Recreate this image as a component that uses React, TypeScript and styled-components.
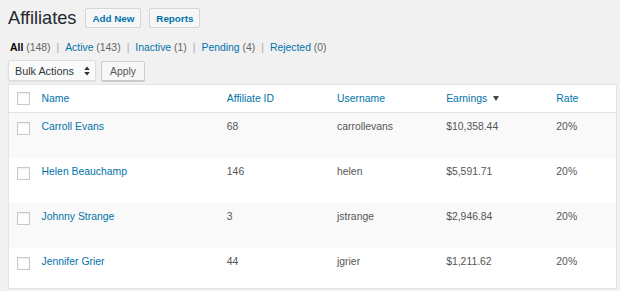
import styled, {createGlobalStyle} from "styled-components";

const GlobalStyle = createGlobalStyle`
  html, body {
    margin: 0;
    background: #f1f1f1;
  }
  body {
    font-family: "Liberation Sans", Arial, sans-serif;
    color: #444;
  }
`;

const Wrap = styled.div`
  padding: 8px 3px 0 8px;
`;

const HeadingRow = styled.div`
  display: flex;
  align-items: center;
  gap: 8px;
  height: 20px;
`;

const Title = styled.h1`
  margin: 0 1px 0 0;
  font-size: 18.2px;
  font-weight: 400;
  line-height: 20px;
  color: #23282d;
`;

const PageButton = styled.a`
  display: inline-flex;
  align-items: center;
  height: 20px;
  box-sizing: border-box;
  padding: 0 6px;
  border: 1px solid #d5d5d5;
  border-radius: 2px;
  background: #f7f7f7;
  color: #0073aa;
  font-size: 9.8px;
  font-weight: 700;
  text-decoration: none;
`;

const Filters = styled.ul`
  display: flex;
  margin: 14px 0 0 2px;
  padding: 0;
  list-style: none;
  font-size: 10.4px;
  line-height: 12px;
  color: #666;
`;

const Filter = styled.li<{ $current?: boolean }>`
  a {
    color: ${p => (p.$current ? "#000" : "#0073aa")};
    font-weight: ${p => (p.$current ? 700 : 400)};
    text-decoration: none;
  }
`;

const Sep = styled.span`
  color: #aaa;
  margin: 0 6px;
`;

const TableNav = styled.div`
  display: flex;
  gap: 5px;
  margin-top: 6px;
  height: 21px;
`;

const BulkSelect = styled.div`
  display: flex;
  align-items: center;
  justify-content: space-between;
  width: 88px;
  box-sizing: border-box;
  padding: 0 5px 0 6px;
  border: 1px solid #ddd;
  border-radius: 2px;
  background: #fafafa;
  box-shadow: 0 1px 2px rgba(0, 0, 0, 0.07);
  font-size: 10.8px;
  color: #32373c;
`;

const Apply = styled.button`
  height: 20px;
  margin-top: 1px;
  padding: 0 8px;
  border: 1px solid #ccc;
  border-radius: 2px;
  background: #f7f7f7;
  box-shadow: 0 1px 0 #ccc;
  font-family: inherit;
  font-size: 10.4px;
  color: #555;
`;

const Table = styled.table`
  margin-top: 3px;
  width: 609px;
  table-layout: fixed;
  border-collapse: collapse;
  border: 1px solid #e5e5e5;
  background: #fff;
  font-size: 10.4px;
`;

const HeadCell = styled.th`
  height: 27px;
  padding: 0 0 0 8px;
  text-align: left;
  font-weight: 400;
  color: #0073aa;
  border-bottom: 1px solid #e1e1e1;
  vertical-align: middle;
`;

const Row = styled.tr<{ $alt: boolean }>`
  background: ${p => (p.$alt ? "#f9f9f9" : "#fff")};
  height: 45px;
  &:last-child {
    height: 41px;
  }
`;

const Cell = styled.td<{ $link?: boolean }>`
  padding: 8px 0 0 8px;
  vertical-align: top;
  line-height: 12px;
  color: ${p => (p.$link ? "#0073aa" : "#555")};
`;

const Check = styled.span`
  display: block;
  width: 13px;
  height: 13px;
  box-sizing: border-box;
  border: 1px solid #c6c9cc;
  background: #fff;
  box-shadow: inset 0 1px 2px rgba(0, 0, 0, 0.08);
`;

const CheckCell = styled(Cell)`
  padding-top: 9px;
`;

const SortArrow = styled.span`
  display: inline-block;
  margin-left: 6px;
  width: 0;
  height: 0;
  border-left: 3.5px solid transparent;
  border-right: 3.5px solid transparent;
  border-top: 5px solid #444;
  vertical-align: 1px;
`;

const rows = [
    {name: "Carroll Evans", id: 68, user: "carrollevans", earn: "$10,358.44"},
    {name: "Helen Beauchamp", id: 146, user: "helen", earn: "$5,591.71"},
    {name: "Johnny Strange", id: 3, user: "jstrange", earn: "$2,946.84"},
    {name: "Jennifer Grier", id: 44, user: "jgrier", earn: "$1,211.62"},
];

const filters = [
    {label: "All", count: 148, current: true},
    {label: "Active", count: 143},
    {label: "Inactive", count: 1},
    {label: "Pending", count: 4},
    {label: "Rejected", count: 0},
];

const SelectArrows = () => (
    <svg width="6" height="10" viewBox="0 0 6 10">
        <path d="M3 0.5 L5.8 4 H0.2 Z M3 9.5 L5.8 6 H0.2 Z" fill="#333" />
    </svg>
);

export default function App() {
    return (
        <Wrap>
            <GlobalStyle />
            <HeadingRow>
                <Title>Affiliates</Title>
                <PageButton>Add New</PageButton>
                <PageButton>Reports</PageButton>
            </HeadingRow>
            <Filters>
                {filters.map((f, i) => (
                    <Filter key={f.label} $current={f.current}>
                        <a href="#">{f.label}</a> ({f.count})
                        {i < filters.length - 1 && <Sep>|</Sep>}
                    </Filter>
                ))}
            </Filters>
            <TableNav>
                <BulkSelect>Bulk Actions <SelectArrows /></BulkSelect>
                <Apply>Apply</Apply>
            </TableNav>
            <Table>
                <colgroup>
                    <col style={{width: 25}} />
                    <col style={{width: 185}} />
                    <col style={{width: 110}} />
                    <col style={{width: 109}} />
                    <col style={{width: 110}} />
                    <col style={{width: 68}} />
                </colgroup>
                <thead>
                    <tr>
                        <HeadCell><Check /></HeadCell>
                        <HeadCell>Name</HeadCell>
                        <HeadCell>Affiliate ID</HeadCell>
                        <HeadCell>Username</HeadCell>
                        <HeadCell>Earnings<SortArrow /></HeadCell>
                        <HeadCell>Rate</HeadCell>
                    </tr>
                </thead>
                <tbody>
                    {rows.map((r, i) => (
                        <Row key={r.user} $alt={i % 2 === 0}>
                            <CheckCell><Check /></CheckCell>
                            <Cell $link>{r.name}</Cell>
                            <Cell>{r.id}</Cell>
                            <Cell>{r.user}</Cell>
                            <Cell>{r.earn}</Cell>
                            <Cell>20%</Cell>
                        </Row>
                    ))}
                </tbody>
            </Table>
        </Wrap>
    );
}
